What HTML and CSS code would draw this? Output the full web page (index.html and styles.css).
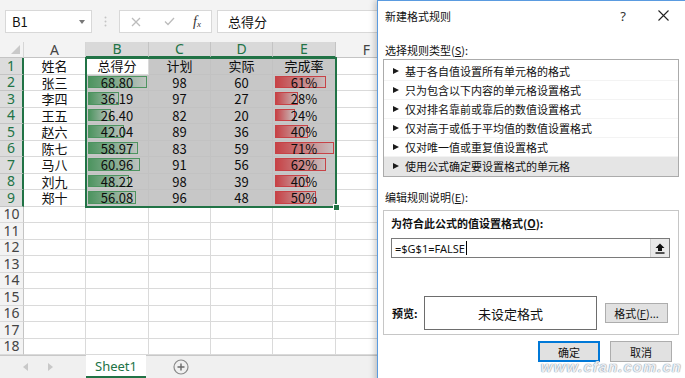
FILE: index.html
```html
<!DOCTYPE html>
<html lang="zh-CN">
<head>
    <meta charset="UTF-8">
    <title>新建格式规则</title>
    <link rel="stylesheet" href="styles.css">
</head>
<body>
    <div class="excel">
        <div class="topbar">
            <div class="namebox"><span>B1</span><i class="drop"></i></div>
            <div class="grip">
                <svg width="3" height="11" viewBox="0 0 3 11"><circle cx="1.5" cy="1.5" r="1" fill="#c4c4c4"/><circle cx="1.5" cy="5.5" r="1" fill="#c4c4c4"/><circle cx="1.5" cy="9.5" r="1" fill="#c4c4c4"/></svg>
            </div>
            <div class="fxbox">
                <span class="ico x"><svg width="10" height="10" viewBox="0 0 10 10"><path d="M1 1L9 9M9 1L1 9" stroke="#bcbcbc" stroke-width="1.3"/></svg></span>
                <span class="ico ok"><svg width="11" height="9" viewBox="0 0 11 9"><path d="M1 4.5L4 7.5L10 1" stroke="#bcbcbc" stroke-width="1.3" fill="none"/></svg></span>
                <span class="ico fx"><i>f</i><sub>x</sub></span>
            </div>
            <div class="formula">总得分</div>
        </div>

        <div class="sheet">
            <div class="hd corner"><svg width="9" height="9" viewBox="0 0 9 9"><path d="M9 0V9H0Z" fill="#c9c9c9"/></svg></div>
            <div class="hd">A</div>
            <div class="hd on">B</div>
            <div class="hd on">C</div>
            <div class="hd on">D</div>
            <div class="hd on">E</div>
            <div class="hd">F</div>
            <div class="hd"></div>

            <div class="rh on">1</div><div class="c">姓名</div><div class="c">总得分</div><div class="c sel">计划</div><div class="c sel">实际</div><div class="c sel">完成率</div><div class="c"></div><div class="c"></div>
            <div class="rh on">2</div><div class="c">张三</div><div class="c sel"><i class="bar g" style="width:59px"></i><span>68.80</span></div><div class="c sel">98</div><div class="c sel">60</div><div class="c sel"><i class="bar r" style="width:51px"></i><span>61%</span></div><div class="c"></div><div class="c"></div>
            <div class="rh on">3</div><div class="c">李四</div><div class="c sel"><i class="bar g" style="width:31px"></i><span>36.19</span></div><div class="c sel">97</div><div class="c sel">27</div><div class="c sel"><i class="bar r" style="width:23px"></i><span>28%</span></div><div class="c"></div><div class="c"></div>
            <div class="rh on">4</div><div class="c">王五</div><div class="c sel"><i class="bar g" style="width:23px"></i><span>26.40</span></div><div class="c sel">82</div><div class="c sel">20</div><div class="c sel"><i class="bar r" style="width:20px"></i><span>24%</span></div><div class="c"></div><div class="c"></div>
            <div class="rh on">5</div><div class="c">赵六</div><div class="c sel"><i class="bar g" style="width:36px"></i><span>42.04</span></div><div class="c sel">89</div><div class="c sel">36</div><div class="c sel"><i class="bar r" style="width:33px"></i><span>40%</span></div><div class="c"></div><div class="c"></div>
            <div class="rh on">6</div><div class="c">陈七</div><div class="c sel"><i class="bar g" style="width:50px"></i><span>58.97</span></div><div class="c sel">83</div><div class="c sel">59</div><div class="c sel"><i class="bar r" style="width:59px"></i><span>71%</span></div><div class="c"></div><div class="c"></div>
            <div class="rh on">7</div><div class="c">马八</div><div class="c sel"><i class="bar g" style="width:52px"></i><span>60.96</span></div><div class="c sel">91</div><div class="c sel">56</div><div class="c sel"><i class="bar r" style="width:51px"></i><span>62%</span></div><div class="c"></div><div class="c"></div>
            <div class="rh on">8</div><div class="c">刘九</div><div class="c sel"><i class="bar g" style="width:41px"></i><span>48.22</span></div><div class="c sel">98</div><div class="c sel">39</div><div class="c sel"><i class="bar r" style="width:33px"></i><span>40%</span></div><div class="c"></div><div class="c"></div>
            <div class="rh on">9</div><div class="c">郑十</div><div class="c sel"><i class="bar g" style="width:48px"></i><span>56.08</span></div><div class="c sel">96</div><div class="c sel">48</div><div class="c sel"><i class="bar r" style="width:41px"></i><span>50%</span></div><div class="c"></div><div class="c"></div>

            <div class="rh">10</div><div class="c"></div><div class="c"></div><div class="c"></div><div class="c"></div><div class="c"></div><div class="c"></div><div class="c"></div>
            <div class="rh">11</div><div class="c"></div><div class="c"></div><div class="c"></div><div class="c"></div><div class="c"></div><div class="c"></div><div class="c"></div>
            <div class="rh">12</div><div class="c"></div><div class="c"></div><div class="c"></div><div class="c"></div><div class="c"></div><div class="c"></div><div class="c"></div>
            <div class="rh">13</div><div class="c"></div><div class="c"></div><div class="c"></div><div class="c"></div><div class="c"></div><div class="c"></div><div class="c"></div>
            <div class="rh">14</div><div class="c"></div><div class="c"></div><div class="c"></div><div class="c"></div><div class="c"></div><div class="c"></div><div class="c"></div>
            <div class="rh">15</div><div class="c"></div><div class="c"></div><div class="c"></div><div class="c"></div><div class="c"></div><div class="c"></div><div class="c"></div>
            <div class="rh">16</div><div class="c"></div><div class="c"></div><div class="c"></div><div class="c"></div><div class="c"></div><div class="c"></div><div class="c"></div>
            <div class="rh">17</div><div class="c"></div><div class="c"></div><div class="c"></div><div class="c"></div><div class="c"></div><div class="c"></div><div class="c"></div>
            <div class="rh">18</div><div class="c"></div><div class="c"></div><div class="c"></div><div class="c"></div><div class="c"></div><div class="c"></div><div class="c"></div>

            <div class="frame"></div>
            <div class="handle"></div>
        </div>

        <div class="tabs">
            <div class="nav">
                <svg width="5" height="8" viewBox="0 0 5 8"><path d="M5 0V8L0 4Z" fill="#c8c8c8"/></svg>
                <svg width="5" height="8" viewBox="0 0 5 8"><path d="M0 0V8L5 4Z" fill="#c8c8c8"/></svg>
            </div>
            <div class="tab">Sheet1</div>
            <div class="add">
                <svg width="16" height="16" viewBox="0 0 16 16"><circle cx="8" cy="8" r="7" fill="none" stroke="#8a8a8a" stroke-width="1.2"/><path d="M8 4.5V11.5M4.5 8H11.5" stroke="#6a6a6a" stroke-width="1.4"/></svg>
            </div>
        </div>
    </div>

    <div class="dlg">
        <div class="dlg-title">
            <span class="name">新建格式规则</span>
            <span class="help">?</span>
            <span class="close"><svg width="11" height="11" viewBox="0 0 11 11"><path d="M0.5 0.5L10.5 10.5M10.5 0.5L0.5 10.5" stroke="#222" stroke-width="1.1"/></svg></span>
        </div>
        <div class="dlg-body">
            <div class="lbl">选择规则类型(<u>S</u>):</div>
            <ul class="rules">
                <li><i class="tri"></i>基于各自值设置所有单元格的格式</li>
                <li><i class="tri"></i>只为包含以下内容的单元格设置格式</li>
                <li><i class="tri"></i>仅对排名靠前或靠后的数值设置格式</li>
                <li><i class="tri"></i>仅对高于或低于平均值的数值设置格式</li>
                <li><i class="tri"></i>仅对唯一值或重复值设置格式</li>
                <li class="on"><i class="tri"></i>使用公式确定要设置格式的单元格</li>
            </ul>
            <div class="lbl gap">编辑规则说明(<u>E</u>):</div>
            <div class="panel">
                <div class="lbl strong">为符合此公式的值设置格式(<u>O</u>):</div>
                <div class="input">
                    <span>=$G$1=FALSE</span><i class="caret"></i>
                    <span class="pick"><svg width="10" height="11" viewBox="0 0 10 11"><path d="M5 0.5L0.5 5H3V8H7V5H9.5Z" fill="#111"/><rect x="0.5" y="9.3" width="9" height="1.4" fill="#111"/></svg></span>
                </div>
                <div class="preview-row">
                    <span class="plabel">预览:</span>
                    <div class="preview">未设定格式</div>
                    <button class="btn fmt">格式(<u>F</u>)...</button>
                </div>
            </div>
            <div class="actions">
                <button class="btn primary">确定</button>
                <button class="btn">取消</button>
            </div>
        </div>
    </div>

    <div class="mark">www.cfan.com.cn</div>
</body>
</html>
```

FILE: styles.css
```css
body {
    margin: 0;
    width: 685px;
    height: 378px;
    overflow: hidden;
    position: relative;
    background: #fff;
    font-family: "Noto Sans CJK SC", "Noto Sans", sans-serif;
    color: #111;
}
.excel {
    display: flex;
    flex-direction: column;
    height: 378px;
}

/* formula bar */
.topbar {
    height: 42px;
    flex: none;
    box-sizing: border-box;
    padding-top: 10px;
    display: flex;
    align-items: flex-start;
    background: #f3f3f3;
}
.namebox {
    margin-left: 5px;
    width: 87px;
    height: 23px;
    box-sizing: border-box;
    padding: 0 6px;
    display: flex;
    align-items: center;
    background: #fff;
    border: 1px solid #d8d8d8;
    font-size: 13px;
}
.namebox span {
    flex: 1;
}
.drop {
    width: 0;
    height: 0;
    border-left: 3.5px solid transparent;
    border-right: 3.5px solid transparent;
    border-top: 4px solid #777;
}
.grip {
    width: 27px;
    height: 23px;
    display: flex;
    align-items: center;
    justify-content: center;
}
.fxbox {
    width: 93px;
    height: 23px;
    box-sizing: border-box;
    display: flex;
    align-items: center;
    background: #fff;
    border: 1px solid #d8d8d8;
}
.ico {
    display: flex;
    align-items: center;
    justify-content: center;
}
.ico.x { width: 32px; }
.ico.ok { width: 34px; }
.ico.fx {
    width: 22px;
    font-family: "Liberation Serif", serif;
    font-size: 14px;
    color: #333;
}
.ico.fx sub {
    font-style: italic;
    font-size: 9px;
    vertical-align: baseline;
    margin-top: 4px;
}
.formula {
    margin-left: 5px;
    flex: 1;
    height: 23px;
    box-sizing: border-box;
    padding-left: 10px;
    display: flex;
    align-items: center;
    background: #fff;
    border: 1px solid #d8d8d8;
    font-size: 13px;
}

/* grid */
.sheet {
    position: relative;
    flex: none;
    display: grid;
    grid-template-columns: 24px 62px 63px 62px 62px 63px 62px 1fr;
    grid-template-rows: 16px repeat(18, 16.5px);
}
.c {
    position: relative;
    box-sizing: border-box;
    display: flex;
    align-items: center;
    justify-content: center;
    border-right: 1px solid #dadada;
    border-bottom: 1px solid #dadada;
    font-size: 13px;
    line-height: 1;
    color: #111;
}
.c span {
    position: relative;
}
.c.sel {
    border-color: #c2c2c2;
}
.c.sel::after {
    content: '';
    position: absolute;
    inset: 0;
    background: rgba(0, 0, 0, 0.22);
}
.bar {
    position: absolute;
    left: 2px;
    top: 1px;
    bottom: 2px;
    box-sizing: border-box;
}
.bar.g {
    background: linear-gradient(to right, #63be7b, #f4fbf6);
    border: 1px solid #63be7b;
}
.bar.r {
    background: linear-gradient(to right, #ff555a, #fff4f4);
    border: 1px solid #ff555a;
}
.hd,
.rh {
    box-sizing: border-box;
    display: flex;
    align-items: center;
    justify-content: center;
    background: #f3f3f3;
    font-family: "Noto Sans", sans-serif;
    font-size: 14px;
    line-height: 1;
    color: #444;
}
.hd {
    border-right: 1px solid #d6d6d6;
    border-bottom: 1px solid #c4c4c4;
}
.hd.on {
    background: #d9d9d9;
    color: #217346;
    border-right-color: #c4c4c4;
    border-bottom: 2px solid #217346;
}
.hd.corner {
    align-items: flex-end;
    justify-content: flex-end;
    padding: 0 3px 3px 0;
}
.rh {
    border-right: 1px solid #c4c4c4;
    border-bottom: 1px solid #dadada;
}
.rh.on {
    background: #dcdcdc;
    color: #217346;
    border-bottom-color: #c4c4c4;
    border-right: 2px solid #217346;
}
.frame {
    position: absolute;
    left: 85px;
    top: 15px;
    width: 252px;
    height: 151px;
    box-sizing: border-box;
    border: 2px solid #217346;
    pointer-events: none;
}
.handle {
    position: absolute;
    left: 333px;
    top: 162px;
    width: 7px;
    height: 7px;
    box-sizing: border-box;
    background: #217346;
    border: 1px solid #fff;
}

/* sheet tabs */
.tabs {
    flex: 1;
    display: flex;
    background: #f0f0f0;
    border-top: 1px solid #c8c8c8;
}
.nav {
    width: 86px;
    box-sizing: border-box;
    padding-left: 23px;
    display: flex;
    align-items: center;
    gap: 20px;
}
.tab {
    width: 60px;
    margin-top: -1px;
    display: flex;
    align-items: center;
    justify-content: center;
    background: #fff;
    border-bottom: 2px solid #217346;
    font-family: "Noto Sans", sans-serif;
    font-size: 13px;
    color: #217346;
}
.add {
    margin-left: 27px;
    display: flex;
    align-items: center;
}

/* dialog */
.dlg {
    position: absolute;
    left: 377px;
    top: 0;
    width: 312px;
    height: 384px;
    box-sizing: border-box;
    background: #fff;
    border: 1px solid #5a9be0;
    box-shadow: -2px 0 6px rgba(0, 0, 0, 0.22);
    font-size: 11px;
    color: #111;
}
.dlg-title {
    height: 29px;
    padding: 0 5px 0 7px;
    display: flex;
    align-items: center;
}
.dlg-title .name {
    flex: 1;
}
.help {
    width: 40px;
    text-align: center;
    font-family: "Noto Sans", sans-serif;
    font-size: 13px;
    color: #333;
}
.close {
    width: 40px;
    display: flex;
    justify-content: center;
}
.dlg-body {
    padding: 12px 0 0 5px;
}
.lbl {
    line-height: 16px;
    padding-left: 2px;
}
.lbl.gap {
    margin-top: 12px;
}
.lbl.strong {
    padding-left: 0;
    font-weight: bold;
}
.rules {
    margin: 1px 0 0;
    padding: 2px 0;
    list-style: none;
    width: 296px;
    height: 118px;
    box-sizing: border-box;
    border: 1px solid #ababab;
}
.rules li {
    height: 19px;
    box-sizing: border-box;
    padding-left: 9px;
    display: flex;
    align-items: center;
    border-bottom: 1px solid #f3f3f3;
}
.rules li.on {
    background: #e5e5e5;
    border-bottom-color: #e5e5e5;
}
.tri {
    width: 0;
    height: 0;
    margin-right: 6px;
    border-top: 3.5px solid transparent;
    border-bottom: 3.5px solid transparent;
    border-left: 6px solid #1a1a1a;
}
.panel {
    margin-top: 5px;
    width: 296px;
    height: 125px;
    box-sizing: border-box;
    padding: 4px 7px 0;
    border: 1px solid #c6c6c6;
}
.input {
    margin-top: 7px;
    width: 279px;
    height: 20px;
    box-sizing: border-box;
    padding-left: 3px;
    display: flex;
    align-items: center;
    border: 1px solid #7a7a7a;
    font-family: "Noto Sans", sans-serif;
    font-size: 11px;
}
.caret {
    width: 1px;
    height: 14px;
    margin-left: 1px;
    background: #000;
}
.pick {
    margin-left: auto;
    width: 18px;
    height: 18px;
    display: flex;
    align-items: center;
    justify-content: center;
    background: #e9e9e9;
    border-left: 1px solid #cfcfcf;
}
.preview-row {
    margin-top: 38px;
    height: 34px;
    display: flex;
    align-items: center;
}
.plabel {
    width: 33px;
    padding-left: 1px;
    box-sizing: border-box;
    font-weight: bold;
}
.preview {
    width: 173px;
    height: 34px;
    box-sizing: border-box;
    display: flex;
    align-items: center;
    justify-content: center;
    border: 1px solid #6d6d6d;
    font-size: 13px;
}
.btn {
    height: 21px;
    padding: 0;
    box-sizing: border-box;
    background: #e1e1e1;
    border: 1px solid #adadad;
    font-family: inherit;
    font-size: 11px;
    color: #111;
}
.btn.fmt {
    margin-left: 8px;
    width: 63px;
    height: 20px;
}
.btn.primary {
    border: 2px solid #0078d7;
}
.actions {
    margin-top: 6px;
    width: 296px;
    box-sizing: border-box;
    padding-right: 7px;
    display: flex;
    justify-content: flex-end;
    gap: 10px;
}
.actions .btn {
    width: 62px;
}

.mark {
    position: absolute;
    right: 3px;
    bottom: 3px;
    font-family: "Liberation Sans", sans-serif;
    font-style: italic;
    font-weight: bold;
    font-size: 15px;
    letter-spacing: 1px;
    color: rgba(255, 255, 255, 0.85);
    text-shadow: 0 0 1px #7f90a4, 0 0 1px #7f90a4;
    pointer-events: none;
}
```
